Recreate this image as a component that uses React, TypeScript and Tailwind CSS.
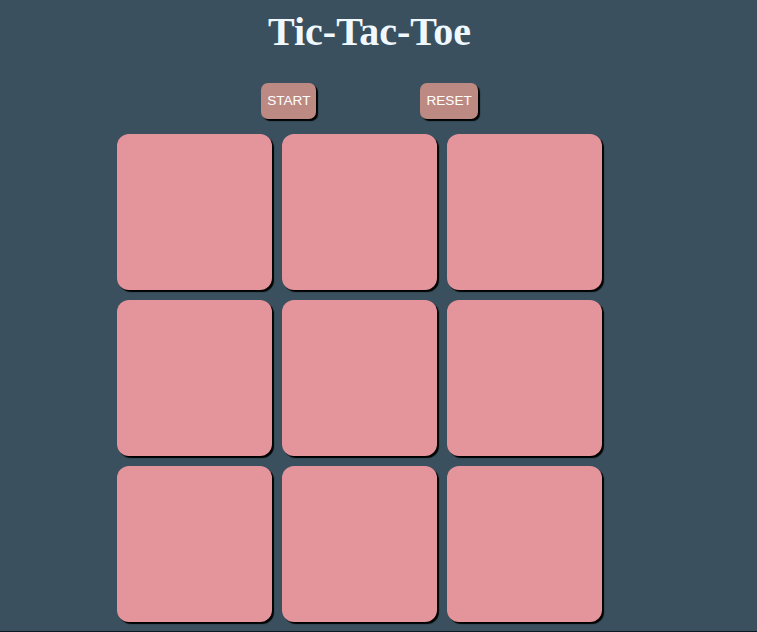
const cells = Array.from({ length: 9 }, (_, i) => i);

export default function App() {
  return (
    <div className="h-[632px] w-full bg-[#3a505e] border-b border-[#0d1a22] overflow-hidden">
      <div className="w-[739px] flex flex-col items-center">
        <h1
          className="mt-[9px] text-[40px] leading-[46px] font-bold text-[#f0f8ff]"
          style={{ fontFamily: '"Liberation Serif", serif' }}
        >
          Tic-Tac-Toe
        </h1>
        <div className="mt-[28px] flex gap-[104px]">
          <button
            className="h-[36px] px-[6px] rounded-[7px] bg-[#bc8a83] text-white text-[13.6px] shadow-[2px_2px_1px_#000]"
            style={{ fontFamily: '"Liberation Sans", Arial, sans-serif' }}
          >
            START
          </button>
          <button
            className="h-[36px] px-[6px] rounded-[7px] bg-[#bc8a83] text-white text-[13.6px] shadow-[2px_2px_1px_#000]"
            style={{ fontFamily: '"Liberation Sans", Arial, sans-serif' }}
          >
            RESET
          </button>
        </div>
      </div>
      <div className="ml-[117px] mt-[15px] grid grid-cols-[repeat(3,155px)] gap-x-[10px] gap-y-[10px]">
        {cells.map((i) => (
          <div
            key={i}
            className="h-[156px] rounded-[12px] bg-[#e4959c] shadow-[2px_2px_1px_#000]"
          />
        ))}
      </div>
    </div>
  );
}
